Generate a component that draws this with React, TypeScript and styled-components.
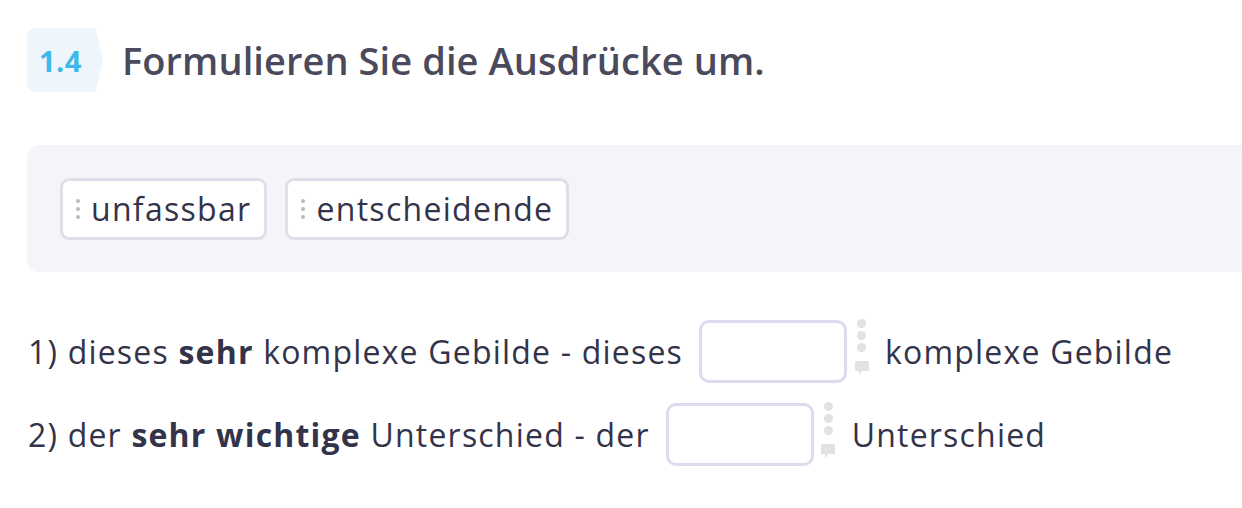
import React from "react";
import styled, { createGlobalStyle } from "styled-components";

const Global = createGlobalStyle`
  html, body { margin: 0; padding: 0; background: #ffffff; }
  body { font-family: "Open Sans", "Noto Sans", sans-serif; overflow: hidden; }
`;

const Page = styled.div`
  padding: 28px 0 0 27px;
  width: 1242px;
  box-sizing: border-box;
`;

const Header = styled.div`
  display: flex;
  align-items: center;
  gap: 19px;
  height: 64px;
`;

const Badge = styled.div`
  width: 76px;
  height: 64px;
  box-sizing: border-box;
  padding-left: 12px;
  display: flex;
  align-items: center;
  background: #eef6fb;
  border-radius: 8px 0 0 8px;
  clip-path: polygon(0 0, 90% 0, 100% 50%, 90% 100%, 0 100%);
  color: #3cb9ea;
  font-weight: 700;
  font-size: 29px;
  letter-spacing: 0.5px;
`;

const Title = styled.h1`
  margin: 0;
  font-size: 38px;
  font-weight: 600;
  color: #4a4a5c;
  letter-spacing: 0.08px;
`;

const Bank = styled.div`
  margin-top: 53px;
  height: 127px;
  width: calc(100% + 20px);
  box-sizing: border-box;
  background: #f4f5f9;
  border-radius: 12px;
  display: flex;
  align-items: center;
  gap: 18px;
  padding-left: 33px;
`;

const Chip = styled.div`
  height: 62px;
  box-sizing: border-box;
  border: 3px solid #dfdfe9;
  border-radius: 9px;
  background: #ffffff;
  display: flex;
  align-items: center;
  padding: 0 13px 0 13px;
  gap: 11px;
  font-size: 32px;
  letter-spacing: 1.3px;
  color: #33334a;
`;

const Grip = styled.span`
  display: flex;
  flex-direction: column;
  gap: 4px;
  & > i {
    width: 4px;
    height: 4px;
    border-radius: 50%;
    background: #b9b9c2;
  }
`;

const Exercises = styled.div`
  margin-top: 48px;
  display: flex;
  flex-direction: column;
  gap: 20px;
`;

const Row = styled.div`
  display: flex;
  align-items: center;
  font-size: 32px;
  letter-spacing: 1.2px;
  color: #33334a;
  height: 63px;
  padding-left: 1px;
`;

const Text = styled.span`
  white-space: pre;
`;

const Blank = styled.div`
  width: 148px;
  height: 63px;
  box-sizing: border-box;
  border: 3px solid #dcdcef;
  border-radius: 10px;
  background: #fff;
  margin: 0 7px 0 16px;
`;

const Tools = styled.div`
  width: 15px;
  height: 66px;
  display: flex;
  flex-direction: column;
  align-items: center;
  margin-right: 16px;
  & > i {
    width: 9px;
    height: 9px;
    border-radius: 50%;
    background: #e2e2e6;
    margin-top: 3px;
  }
  & > i:first-child {
    margin-top: 0;
  }
  & > svg {
    margin-top: 9px;
  }
`;

const Bubble = () => (
  <svg width="14" height="15" viewBox="0 0 14 15">
    <path d="M1 0h12a1 1 0 0 1 1 1v8a1 1 0 0 1-1 1H7l-3 4.5V10H1a1 1 0 0 1-1-1V1a1 1 0 0 1 1-1z" fill="#e2e2e6" />
  </svg>
);

const Word = ({ children }: { children: string }) => (
  <Chip>
    <Grip>
      <i />
      <i />
      <i />
    </Grip>
    {children}
  </Chip>
);

const Gap = () => (
  <>
    <Blank />
    <Tools>
      <i />
      <i />
      <i />
      <Bubble />
    </Tools>
  </>
);

export default function App() {
  return (
    <Page>
      <Global />
      <Header>
        <Badge>1.4</Badge>
        <Title>Formulieren Sie die Ausdrücke um.</Title>
      </Header>
      <Bank>
        <Word>unfassbar</Word>
        <Word>entscheidende</Word>
      </Bank>
      <Exercises>
        <Row>
          <Text>1) dieses </Text>
          <Text as="b">sehr</Text>
          <Text> komplexe Gebilde - dieses</Text>
          <Gap />
          <Text>komplexe Gebilde</Text>
        </Row>
        <Row>
          <Text>2) der </Text>
          <Text as="b">sehr wichtige</Text>
          <Text> Unterschied - der</Text>
          <Gap />
          <Text>Unterschied</Text>
        </Row>
      </Exercises>
    </Page>
  );
}
